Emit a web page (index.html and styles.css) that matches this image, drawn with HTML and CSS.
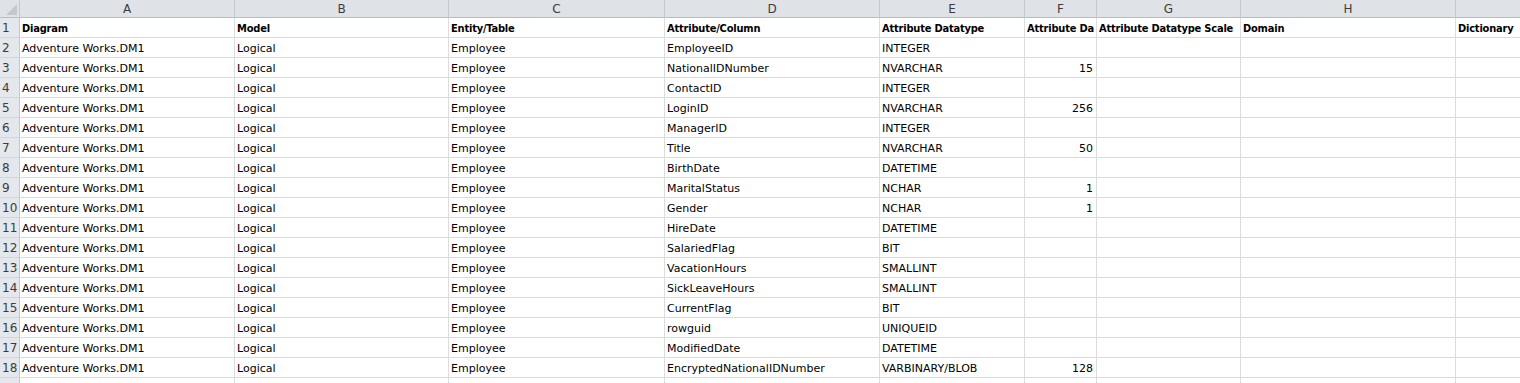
FILE: index.html
```html
<!DOCTYPE html>
<html>
<head>
<meta charset="utf-8">
<link rel="stylesheet" href="styles.css">
</head>
<body>
<div class="sheet">
  <div class="row colheads">
    <div class="corner"><span class="tri"></span></div>
    <div class="ch">A</div><div class="ch">B</div><div class="ch">C</div><div class="ch">D</div><div class="ch">E</div><div class="ch">F</div><div class="ch">G</div><div class="ch">H</div><div class="ch"></div>
  </div>
  <div class="row hdr">
    <div class="rh">1</div>
    <div class="c">Diagram</div><div class="c">Model</div><div class="c">Entity/Table</div><div class="c">Attribute/Column</div><div class="c">Attribute Datatype</div><div class="c">Attribute Da</div><div class="c">Attribute Datatype Scale</div><div class="c">Domain</div><div class="c">Dictionary</div>
  </div>
  <div class="row"><div class="rh">2</div><div class="c">Adventure Works.DM1</div><div class="c">Logical</div><div class="c">Employee</div><div class="c">EmployeeID</div><div class="c">INTEGER</div><div class="c n"></div><div class="c"></div><div class="c"></div><div class="c"></div></div>
  <div class="row"><div class="rh">3</div><div class="c">Adventure Works.DM1</div><div class="c">Logical</div><div class="c">Employee</div><div class="c">NationalIDNumber</div><div class="c">NVARCHAR</div><div class="c n">15</div><div class="c"></div><div class="c"></div><div class="c"></div></div>
  <div class="row"><div class="rh">4</div><div class="c">Adventure Works.DM1</div><div class="c">Logical</div><div class="c">Employee</div><div class="c">ContactID</div><div class="c">INTEGER</div><div class="c n"></div><div class="c"></div><div class="c"></div><div class="c"></div></div>
  <div class="row"><div class="rh">5</div><div class="c">Adventure Works.DM1</div><div class="c">Logical</div><div class="c">Employee</div><div class="c">LoginID</div><div class="c">NVARCHAR</div><div class="c n">256</div><div class="c"></div><div class="c"></div><div class="c"></div></div>
  <div class="row"><div class="rh">6</div><div class="c">Adventure Works.DM1</div><div class="c">Logical</div><div class="c">Employee</div><div class="c">ManagerID</div><div class="c">INTEGER</div><div class="c n"></div><div class="c"></div><div class="c"></div><div class="c"></div></div>
  <div class="row"><div class="rh">7</div><div class="c">Adventure Works.DM1</div><div class="c">Logical</div><div class="c">Employee</div><div class="c">Title</div><div class="c">NVARCHAR</div><div class="c n">50</div><div class="c"></div><div class="c"></div><div class="c"></div></div>
  <div class="row"><div class="rh">8</div><div class="c">Adventure Works.DM1</div><div class="c">Logical</div><div class="c">Employee</div><div class="c">BirthDate</div><div class="c">DATETIME</div><div class="c n"></div><div class="c"></div><div class="c"></div><div class="c"></div></div>
  <div class="row"><div class="rh">9</div><div class="c">Adventure Works.DM1</div><div class="c">Logical</div><div class="c">Employee</div><div class="c">MaritalStatus</div><div class="c">NCHAR</div><div class="c n">1</div><div class="c"></div><div class="c"></div><div class="c"></div></div>
  <div class="row"><div class="rh">10</div><div class="c">Adventure Works.DM1</div><div class="c">Logical</div><div class="c">Employee</div><div class="c">Gender</div><div class="c">NCHAR</div><div class="c n">1</div><div class="c"></div><div class="c"></div><div class="c"></div></div>
  <div class="row"><div class="rh">11</div><div class="c">Adventure Works.DM1</div><div class="c">Logical</div><div class="c">Employee</div><div class="c">HireDate</div><div class="c">DATETIME</div><div class="c n"></div><div class="c"></div><div class="c"></div><div class="c"></div></div>
  <div class="row"><div class="rh">12</div><div class="c">Adventure Works.DM1</div><div class="c">Logical</div><div class="c">Employee</div><div class="c">SalariedFlag</div><div class="c">BIT</div><div class="c n"></div><div class="c"></div><div class="c"></div><div class="c"></div></div>
  <div class="row"><div class="rh">13</div><div class="c">Adventure Works.DM1</div><div class="c">Logical</div><div class="c">Employee</div><div class="c">VacationHours</div><div class="c">SMALLINT</div><div class="c n"></div><div class="c"></div><div class="c"></div><div class="c"></div></div>
  <div class="row"><div class="rh">14</div><div class="c">Adventure Works.DM1</div><div class="c">Logical</div><div class="c">Employee</div><div class="c">SickLeaveHours</div><div class="c">SMALLINT</div><div class="c n"></div><div class="c"></div><div class="c"></div><div class="c"></div></div>
  <div class="row"><div class="rh">15</div><div class="c">Adventure Works.DM1</div><div class="c">Logical</div><div class="c">Employee</div><div class="c">CurrentFlag</div><div class="c">BIT</div><div class="c n"></div><div class="c"></div><div class="c"></div><div class="c"></div></div>
  <div class="row"><div class="rh">16</div><div class="c">Adventure Works.DM1</div><div class="c">Logical</div><div class="c">Employee</div><div class="c">rowguid</div><div class="c">UNIQUEID</div><div class="c n"></div><div class="c"></div><div class="c"></div><div class="c"></div></div>
  <div class="row"><div class="rh">17</div><div class="c">Adventure Works.DM1</div><div class="c">Logical</div><div class="c">Employee</div><div class="c">ModifiedDate</div><div class="c">DATETIME</div><div class="c n"></div><div class="c"></div><div class="c"></div><div class="c"></div></div>
  <div class="row"><div class="rh">18</div><div class="c">Adventure Works.DM1</div><div class="c">Logical</div><div class="c">Employee</div><div class="c">EncryptedNationalIDNumber</div><div class="c">VARBINARY/BLOB</div><div class="c n">128</div><div class="c"></div><div class="c"></div><div class="c"></div></div>
  <div class="row"><div class="rh"></div><div class="c"></div><div class="c"></div><div class="c"></div><div class="c"></div><div class="c"></div><div class="c n"></div><div class="c"></div><div class="c"></div><div class="c"></div></div>
</div>
</body>
</html>
```

FILE: styles.css
```css
html, body {
  margin: 0;
  padding: 0;
  background: #ffffff;
  overflow: hidden;
}
.sheet {
  width: 1520px;
  height: 383px;
  overflow: hidden;
  font-family: "DejaVu Sans", "Liberation Sans", sans-serif;
  font-size: 11px;
  color: #000;
}
.row {
  display: grid;
  grid-template-columns: 20px 215px 214px 216px 215px 145px 72px 144px 215px 215px;
  height: 20px;
}
.row > div {
  box-sizing: border-box;
  border-right: 1px solid #dadcdd;
  border-bottom: 1px solid #dadcdd;
  white-space: nowrap;
  overflow: hidden;
  padding-top: 2px;
  line-height: 17px;
}
.colheads {
  height: 18px;
}
.colheads > div {
  background: #dfe3e8;
  border-right: 1px solid #c5c9cf;
  border-bottom: 1px solid #b9bdc2;
  padding-top: 1px;
  line-height: 16px;
  text-align: center;
  color: #3c3c3c;
  font-size: 12px;
}
.corner {
  position: relative;
}
.tri {
  position: absolute;
  right: 2px;
  bottom: 2px;
  width: 0;
  height: 0;
  border-left: 11px solid transparent;
  border-bottom: 11px solid #c4c8cc;
}
.row > .rh {
  background: #e4e7eb;
  border-right: 1px solid #c5c9cf;
  border-bottom: 1px solid #d2d5d9;
  color: #3c3c3c;
  font-size: 12px;
  padding-left: 2px;
}
.c {
  padding-left: 2px;
  padding-right: 3px;
}
.hdr .c {
  font-weight: bold;
  font-family: "DejaVu Sans Condensed", "DejaVu Sans", sans-serif;
  letter-spacing: -0.2px;
}
.n {
  text-align: right;
}
```
